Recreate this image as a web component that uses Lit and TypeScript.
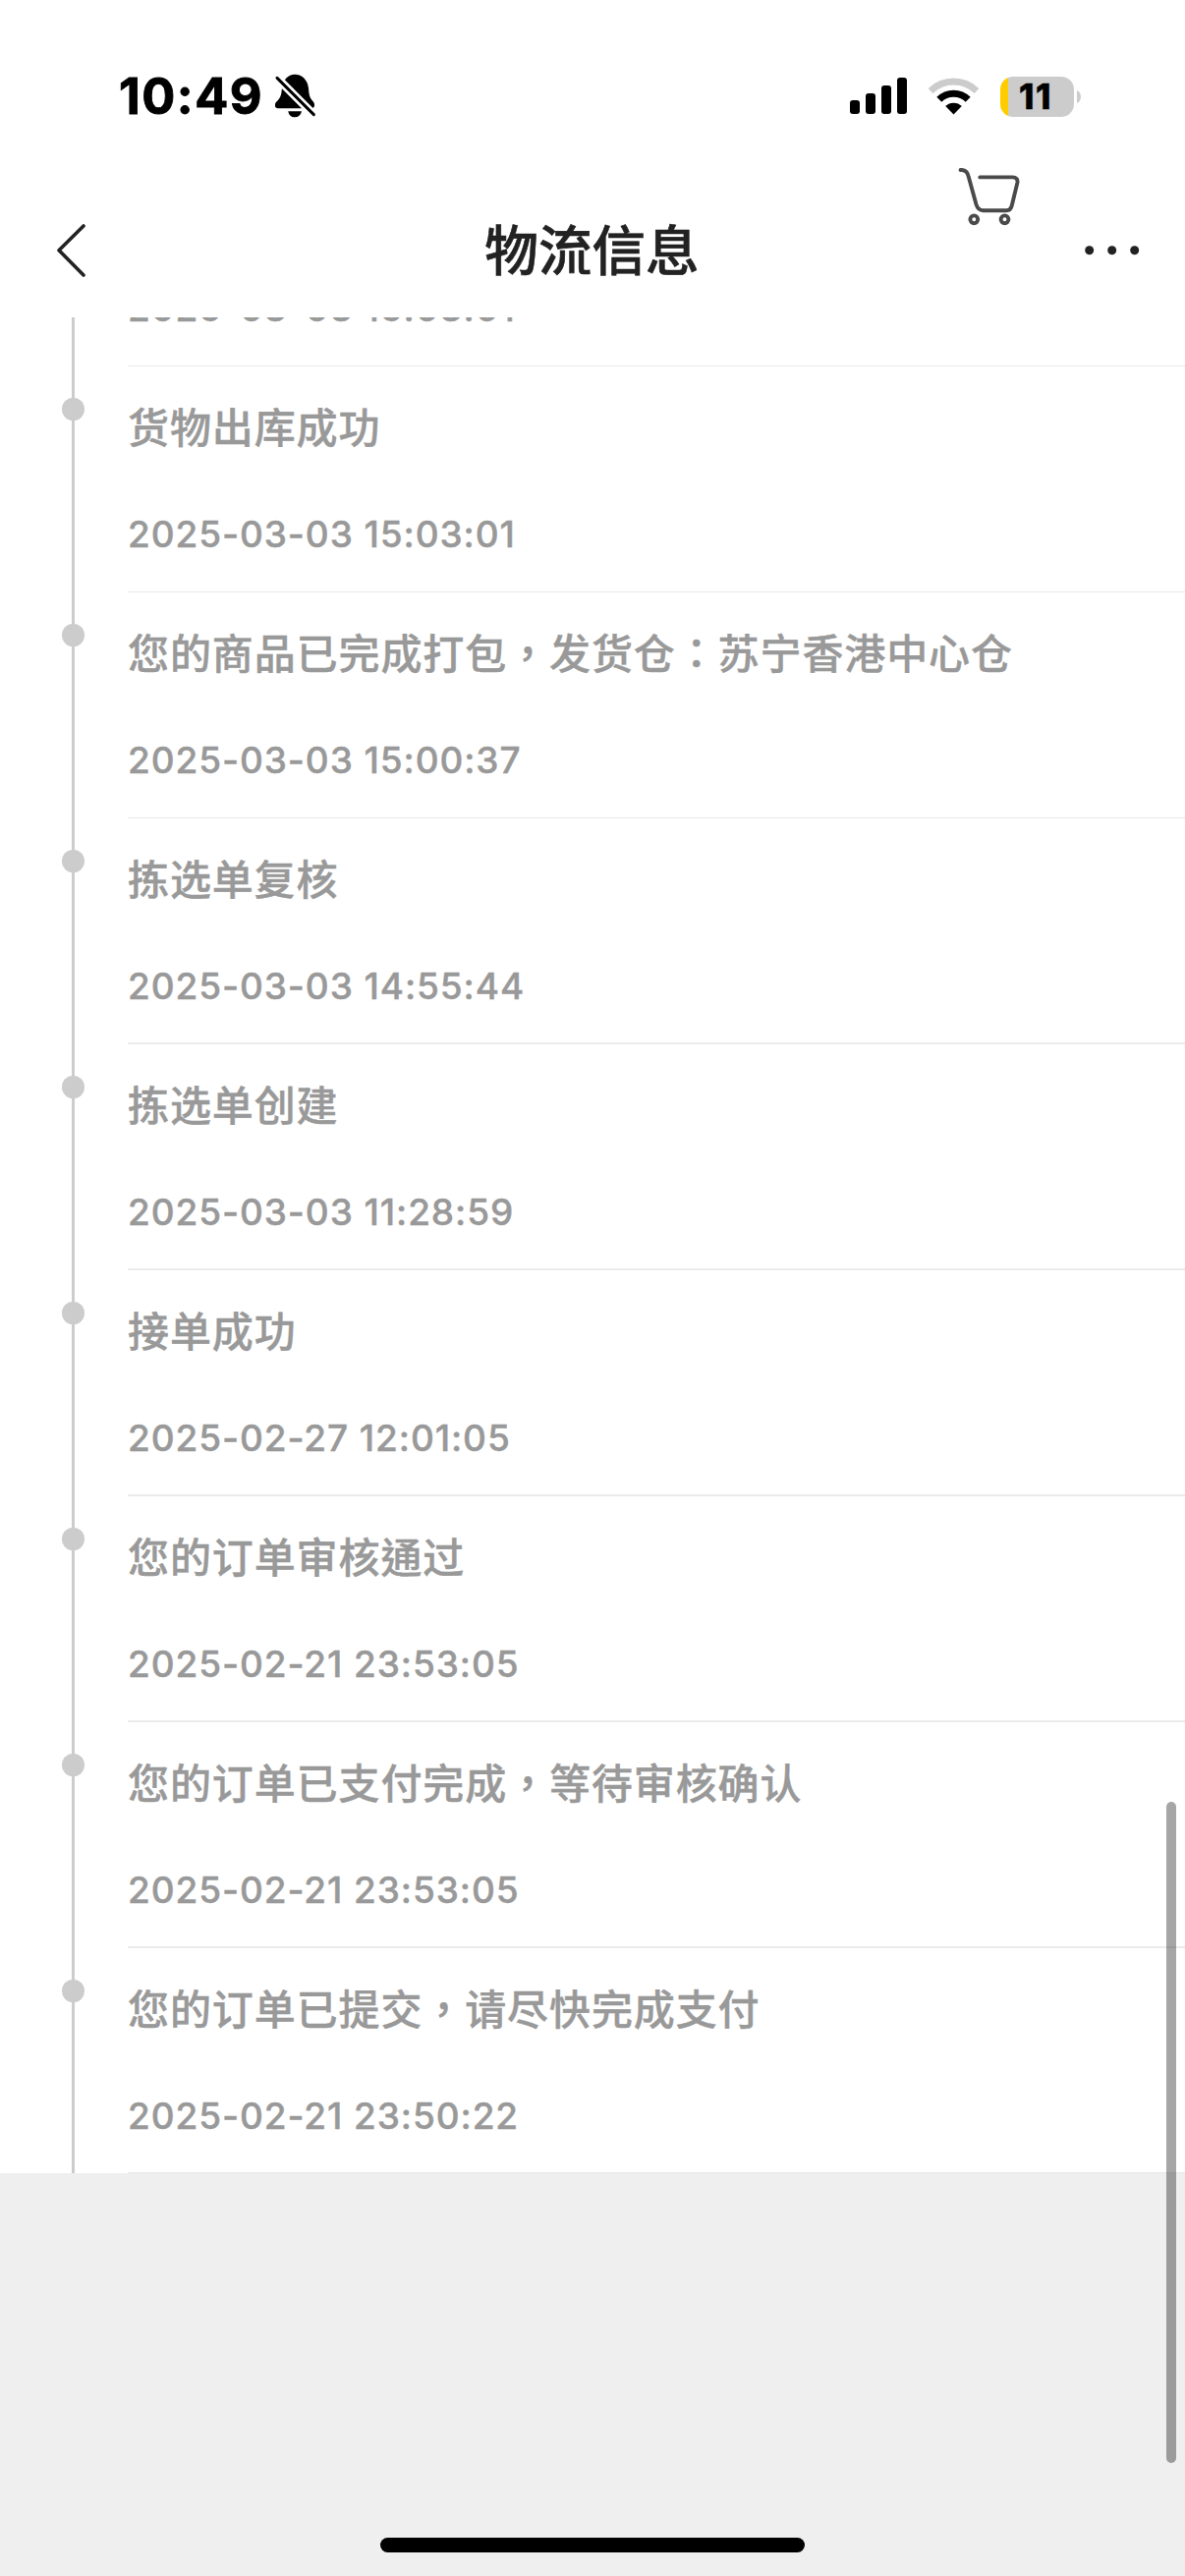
import { LitElement, html, css } from "lit";
import { customElement, property } from "lit/decorators.js";
import { classMap } from "lit/directives/class-map.js";

interface TrackEvent {
  text: string;
  time: string;
  thick?: boolean;
}

const EVENTS: TrackEvent[] = [
  { text: "货物出库成功", time: "2025-03-03 15:03:01" },
  { text: "您的商品已完成打包，发货仓：苏宁香港中心仓", time: "2025-03-03 15:00:37" },
  { text: "拣选单复核", time: "2025-03-03 14:55:44", thick: true },
  { text: "拣选单创建", time: "2025-03-03 11:28:59", thick: true },
  { text: "接单成功", time: "2025-02-27 12:01:05", thick: true },
  { text: "您的订单审核通过", time: "2025-02-21 23:53:05", thick: true },
  { text: "您的订单已支付完成，等待审核确认", time: "2025-02-21 23:53:05", thick: true },
  { text: "您的订单已提交，请尽快完成支付", time: "2025-02-21 23:50:22" },
];

@customElement("status-bar")
class StatusBar extends LitElement {
  static styles = css`
    :host {
      display: flex;
      justify-content: space-between;
      align-items: center;
      height: 60px;
      padding: 68px 106px 0 121px;
      font-family: Inter, sans-serif;
      color: #000;
    }
    .left, .right { display: flex; align-items: center; }
    .left { gap: 11px; }
    .clock {
      font-size: 50.5px;
      font-weight: 700;
      line-height: 60px;
      letter-spacing: 1.5px;
      -webkit-text-stroke: 0.9px #000;
    }
    .right { gap: 22px; }
    svg { display: block; }
    .battery { display: flex; align-items: center; gap: 3px; }
    .body {
      display: flex;
      align-items: center;
      justify-content: center;
      width: 75px;
      height: 41px;
      border-radius: 13px;
      background: linear-gradient(to right, #fc0 8px, #ccc 8px);
      font-size: 35px;
      font-weight: 800;
      line-height: 41px;
    }
    .level { margin-left: -3px; letter-spacing: 1.6px; -webkit-text-stroke: 0.5px #000; }
  `;

  render() {
    return html`
      <div class="left">
        <span class="clock">10:49</span>
        <svg width="43" height="46" viewBox="569 77 129 138">
          <path d="M632 79C612 79 596 96 593 119C591 145 588 151 574 165C570 173 571 182 580 183H685C694 181 694 169 688 162C678 151 676 146 674 122C672 97 655 79 632 79Z" />
          <path d="M612 192H653C650 204 643 210 632 210S614 204 612 192Z" />
          <path d="M570 82L700 212" stroke="#fff" stroke-width="25" />
          <path d="M578 90L690 202" stroke="#000" stroke-width="9" stroke-linecap="round" />
        </svg>
      </div>
      <div class="right">
        <svg width="58" height="38" viewBox="0 0 58 38">
          <rect x="0" y="23" width="10" height="14" rx="3" />
          <rect x="16" y="16" width="10" height="21" rx="3" />
          <rect x="32" y="8" width="10" height="29" rx="3" />
          <rect x="48" y="0" width="10" height="37" rx="3" />
        </svg>
        <svg width="51" height="38" viewBox="0 0 51 38" fill="none" stroke-width="7">
          <path d="M2 13.6A33.5 33.5 0 0 1 49 13.6" stroke="#ccc" />
          <path d="M10.8 22.3A20.8 20.8 0 0 1 40.2 22.3" stroke="#000" />
          <path d="M25.5 37.5L17.2 29.1A11.7 11.7 0 0 1 33.8 29.1Z" fill="#000" />
        </svg>
        <div class="battery">
          <div class="body"><span class="level">11</span></div>
          <svg width="4" height="13" viewBox="0 0 4 13"><path d="M0 0C5.3 2 5.3 11 0 13Z" fill="#ccc" /></svg>
        </div>
      </div>
    `;
  }
}

@customElement("nav-header")
class NavHeader extends LitElement {
  static styles = css`
    :host {
      display: grid;
      grid-template-columns: 1fr auto 1fr;
      height: 195px;
      font-family: "Noto Sans CJK TC", sans-serif;
    }
    .back { margin: 98px 0 0 56px; }
    .title {
      margin: 84px 0 0 -1px;
      height: 80px;
      font-size: 54.6px;
      font-weight: 500;
      line-height: 80px;
      color: #222;
      -webkit-text-stroke: 0.6px #222;
    }
    .actions { display: flex; justify-content: flex-end; gap: 65px; padding-right: 45px; }
    .cart { margin-top: 40px; }
    .more { margin-top: 120px; }
    svg { display: block; fill: none; stroke-linecap: round; stroke-linejoin: round; }
  `;

  render() {
    return html`
      <svg class="back" width="34" height="58" viewBox="0 0 34 58" stroke="#222" stroke-width="3.6">
        <path d="M29 4L4 28.7L29 54" />
      </svg>
      <div class="title">物流信息</div>
      <div class="actions">
        <svg class="cart" width="66" height="66" viewBox="973.5 168 66 66" stroke="#4a4a4a" stroke-width="3.9">
          <path d="M978 173H979.5C983 173.3 985.2 175.4 986 179L994 208C995.2 212 997.2 214.2 1001 214.2H1024.8C1028 214.2 1029.6 212.2 1030.3 209L1035.9 186C1036.6 182.6 1034.5 180.4 1031 180.4H997.8" />
          <circle cx="991.8" cy="223.3" r="3.9" />
          <circle cx="1023" cy="223.3" r="3.9" />
        </svg>
        <svg class="more" width="57" height="14" viewBox="0 0 57 14">
          <g fill="#222"><circle cx="4.7" cy="6.7" r="4.5" /><circle cx="27.7" cy="6.7" r="4.5" /><circle cx="50.7" cy="6.7" r="4.5" /></g>
        </svg>
      </div>
    `;
  }
}

@customElement("track-row")
class TrackRow extends LitElement {
  @property({ attribute: false }) event!: TrackEvent;

  static styles = css`
    :host { display: flex; height: 230px; flex: none; }
    :host(:last-child) { height: 229px; }
    .rail {
      width: 130px;
      flex: none;
      background: linear-gradient(#ccc, #ccc) 73px 0 / 3px 100% no-repeat;
    }
    .dot {
      width: 22.5px;
      height: 23.5px;
      margin: 31.6px 0 0 63px;
      border-radius: 50%;
      background: #ccc;
    }
    .content {
      flex: 1;
      box-sizing: border-box;
      display: flex;
      flex-direction: column;
      padding-top: 30.4px;
      gap: 55.6px;
      border-bottom: 1px solid #e8e8e8;
      color: #999;
    }
    .content.thick { border-bottom: 2px solid #ebebeb; }
    .text {
      min-height: 60px;
      font-family: "Noto Sans CJK TC", sans-serif;
      font-size: 42px;
      font-weight: 500;
      line-height: 60px;
      letter-spacing: 0.9px;
      -webkit-text-stroke: 0.4px #999;
    }
    .time {
      font-family: Inter, sans-serif;
      font-size: 37px;
      font-weight: 500;
      line-height: 50px;
      letter-spacing: 0.9px;
      -webkit-text-stroke: 0.4px #999;
    }
  `;

  render() {
    return html`
      <div class="rail"><div class="dot"></div></div>
      <div class=${classMap({ content: true, thick: !!this.event.thick })}>
        <div class="text">${this.event.text}</div>
        <div class="time">${this.event.time}</div>
      </div>
    `;
  }
}

@customElement("app-root")
class AppRoot extends LitElement {
  static styles = css`
    :host {
      display: flex;
      flex-direction: column;
      position: relative;
      width: 1206px;
      height: 2622px;
      overflow: hidden;
      background: #efefef;
    }
    .top { background: #fff; height: 323px; flex: none; }
    .list {
      display: flex;
      flex-direction: column;
      justify-content: flex-end;
      height: 1889px;
      flex: none;
      overflow: hidden;
      background: #fff;
    }
    .scrollbar {
      position: absolute;
      left: 1187px;
      top: 1834px;
      width: 10px;
      height: 673px;
      border-radius: 5px;
      background: rgba(0, 0, 0, 0.35);
    }
    .home {
      position: absolute;
      left: 387px;
      top: 2583px;
      width: 432px;
      height: 15px;
      border-radius: 8px;
      background: #000;
    }
  `;

  render() {
    const previous: TrackEvent = { text: "", time: "2025-03-03 15:03:01" };
    return html`
      <div class="top">
        <status-bar></status-bar>
        <nav-header></nav-header>
      </div>
      <div class="list">
        ${[previous, ...EVENTS].map((e) => html`<track-row .event=${e}></track-row>`)}
      </div>
      <div class="scrollbar"></div>
      <div class="home"></div>
    `;
  }
}
